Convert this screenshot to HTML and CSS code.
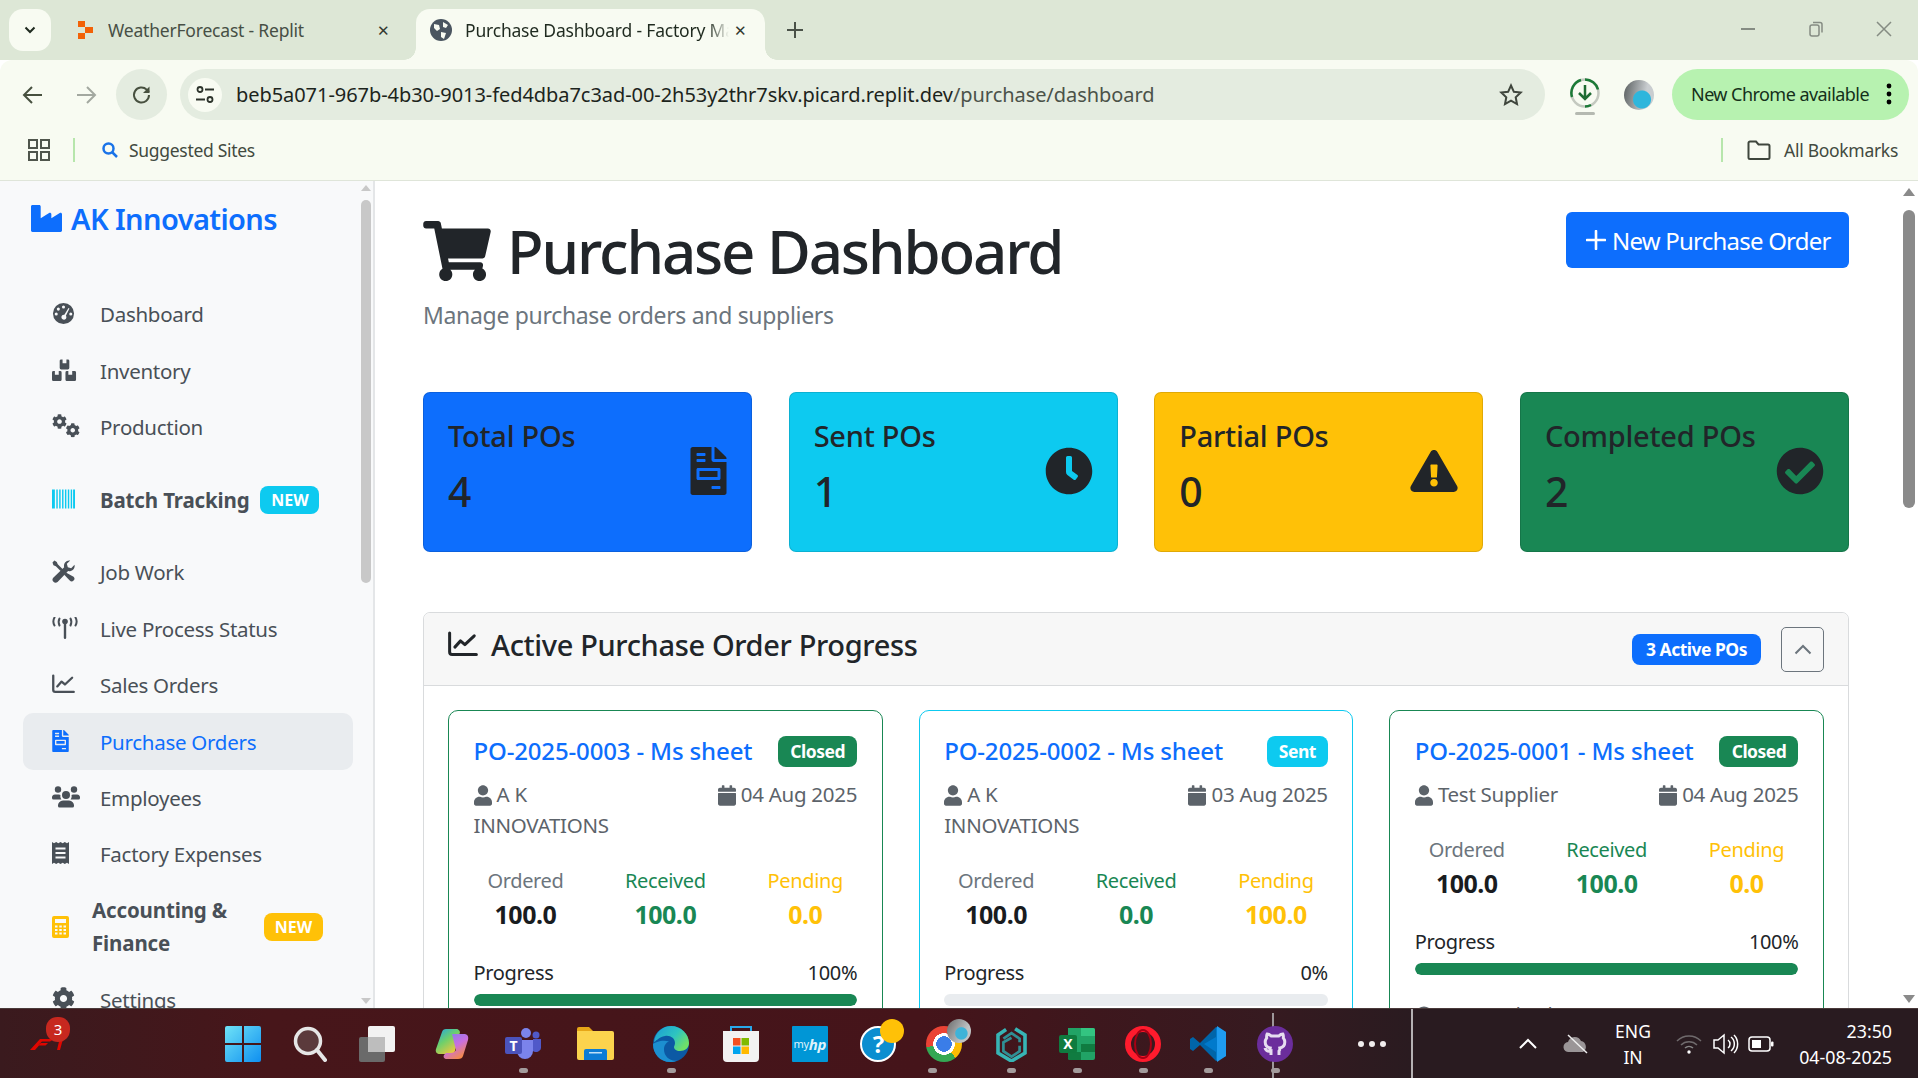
FILE: index.html
```html
<!DOCTYPE html>
<html lang="en">
<head>
<meta charset="utf-8">
<title>Purchase Dashboard - Factory Management</title>
<link rel="stylesheet" href="styles.css">
</head>
<body>
<svg class="sprite" aria-hidden="true">
  <symbol id="i-factory" viewBox="0 0 512 512"><path d="M475.115 163.781L336 252.309v-68.28c0-18.916-20.931-30.399-36.885-20.248L160 252.309V56c0-13.255-10.745-24-24-24H24C10.745 32 0 42.745 0 56v400c0 13.255 10.745 24 24 24h464c13.255 0 24-10.745 24-24V184.029c0-18.917-20.931-30.399-36.885-20.248z"/></symbol>
  <symbol id="i-gauge" viewBox="0 0 24 24"><path fill-rule="evenodd" d="M12 1a11 11 0 1 0 0 22 11 11 0 0 0 0-22zM12 3.6a1.6 1.6 0 1 1 0 3.2 1.6 1.6 0 0 1 0-3.2zM6.6 5.8a1.6 1.6 0 1 1 0 3.2 1.6 1.6 0 0 1 0-3.2zM4.4 11a1.6 1.6 0 1 1 0 3.2 1.6 1.6 0 0 1 0-3.2zM19.6 11a1.6 1.6 0 1 1 0 3.2 1.6 1.6 0 0 1 0-3.2zM17.2 6.2l1 .5-3.7 7.6a2.6 2.6 0 1 1-1.6-1z"/></symbol>
  <symbol id="i-boxes" viewBox="0 0 26 22"><path fill-rule="evenodd" d="M8 1.5A1.5 1.5 0 0 1 9.500 0H11v4h4V0h1.500A1.500 1.500 0 0 1 18 1.500V9a1.500 1.500 0 0 1-1.500 1.500h-7A1.500 1.500 0 0 1 8 9zM0 13.500A1.500 1.500 0 0 1 1.500 12H3v4h4v-4h1.500a1.500 1.500 0 0 1 1.500 1.500V21a1.500 1.500 0 0 1-1.500 1.500h-7A1.500 1.500 0 0 1 0 21zM14 13.500a1.500 1.500 0 0 1 1.500-1.500H17v4h4v-4h2.500a1.500 1.500 0 0 1 1.500 1.500V21a1.500 1.500 0 0 1-1.500 1.500h-8A1.500 1.500 0 0 1 14 21z"/></symbol>
  <symbol id="i-cog" viewBox="0 0 512 512"><path d="M487.4 315.7l-42.600-24.600c4.300-23.200 4.300-47 0-70.200l42.600-24.600c4.900-2.800 7.100-8.600 5.500-14-11.100-35.600-30-67.800-54.700-94.600-3.800-4.100-10-5.100-14.800-2.300L380.800 110c-17.900-15.400-38.500-27.300-60.800-35.100V25.800c0-5.600-3.900-10.500-9.400-11.700-36.700-8.200-74.300-7.800-109.200 0-5.500 1.200-9.400 6.100-9.400 11.700V75c-22.200 7.900-42.800 19.800-60.800 35.100L88.700 85.500c-4.900-2.800-11-1.900-14.800 2.300-24.700 26.700-43.600 58.900-54.700 94.600-1.700 5.400.6 11.200 5.500 14L67.300 221c-4.300 23.200-4.300 47 0 70.200l-42.600 24.600c-4.900 2.800-7.100 8.600-5.500 14 11.100 35.600 30 67.800 54.700 94.600 3.800 4.100 10 5.100 14.800 2.300l42.600-24.600c17.900 15.400 38.500 27.300 60.800 35.100v49.200c0 5.600 3.900 10.500 9.400 11.700 36.700 8.200 74.300 7.800 109.200 0 5.500-1.200 9.400-6.100 9.400-11.700v-49.200c22.200-7.900 42.800-19.800 60.800-35.100l42.600 24.600c4.900 2.800 11 1.900 14.800-2.300 24.700-26.700 43.600-58.900 54.700-94.600 1.500-5.500-.7-11.300-5.600-14.100zM256 336c-44.100 0-80-35.900-80-80s35.900-80 80-80 80 35.900 80 80-35.900 80-80 80z"/></symbol>
  <symbol id="i-cogs" viewBox="0 0 28 24"><use href="#i-cog" x="0" y="0" width="15" height="15"/><use href="#i-cog" x="13.500" y="9" width="14.500" height="14.500"/></symbol>
  <symbol id="i-barcode" viewBox="0 0 24 20"><path d="M0 0h3v20H0zM4.500 0h1.500v20H4.500zM7.500 0h1.500v20H7.500zM10.500 0h1.500v20h-1.500zM13.500 0h1.500v20h-1.500zM16.500 0h1.500v20h-1.500zM19.500 0h1.500v20h-1.500zM22 0h2v20h-2z"/></symbol>
  <symbol id="i-tools" viewBox="0 0 24 24"><path d="M2.500 0.500 0.500 2.500l1 3 2.500 1 5.500 5.500 2-2L6 4.500l-1-2.500zM18 .5a5.500 5.500 0 0 0-5.300 7L1.300 18.500a3.200 3.200 0 0 0 4.500 4.500L16.800 11.500A5.500 5.500 0 0 0 23.500 5l-3.500 3.500-3.500-1-1-3.500 3.500-3.500z"/><path d="M14.500 13l-2 2 6 6.500a2.800 2.800 0 0 0 4-4z"/></symbol>
  <symbol id="i-tower" viewBox="0 0 26 22"><circle cx="13" cy="4.500" r="2.800"/><rect x="11.800" y="4" width="2.400" height="18" rx="1.200"/><g fill="none" stroke="currentColor" stroke-width="2" stroke-linecap="round"><path d="M7.500 1.500Q5.800 4.500 7.500 8.500"/><path d="M18.500 1.500Q20.200 4.500 18.500 8.500"/><path d="M2.500 .5Q.2 4.500 2.500 8.500"/><path d="M23.500 .5Q25.800 4.500 23.500 8.500"/></g></symbol>
  <symbol id="i-chart" viewBox="0 0 24 20"><g fill="none" stroke="currentColor" stroke-linecap="round" stroke-linejoin="round" stroke-width="2.400"><path d="M1.300 1.200V16.300a2 2 0 0 0 2 2H22.700"/><path d="M5.500 12.500 10 7.500l3.500 3L21 3.500"/></g></symbol>
  <symbol id="i-invoice" viewBox="0 0 384 512"><path d="M288 256H96v64h192v-64zm89-151L279.100 7c-4.500-4.500-10.600-7-17-7H256v128h128v-6.100c0-6.300-2.500-12.400-7-16.900zm-153 31V0H24C10.700 0 0 10.700 0 24v464c0 13.300 10.700 24 24 24h336c13.300 0 24-10.700 24-24V160H248c-13.200 0-24-10.800-24-24zM64 72c0-4.420 3.580-8 8-8h80c4.420 0 8 3.580 8 8v16c0 4.420-3.580 8-8 8H72c-4.420 0-8-3.580-8-8V72zm0 64c0-4.420 3.580-8 8-8h80c4.420 0 8 3.580 8 8v16c0 4.420-3.580 8-8 8H72c-4.420 0-8-3.580-8-8v-16zm256 304c0 4.420-3.580 8-8 8h-80c-4.420 0-8-3.580-8-8v-16c0-4.420 3.580-8 8-8h80c4.420 0 8 3.580 8 8v16zm0-200v96c0 8.840-7.160 16-16 16H80c-8.840 0-16-7.160-16-16v-96c0-8.840 7.160-16 16-16h224c8.840 0 16 7.160 16 16z"/></symbol>
  <symbol id="i-users" viewBox="0 0 28 22"><circle cx="6" cy="3.500" r="3.200"/><circle cx="22" cy="3.500" r="3.200"/><circle cx="14" cy="9" r="4"/><path d="M0 12a3 3 0 0 1 3-3.500h4a4 4 0 0 1 1.500.4 5.600 5.600 0 0 0 .9 4.600H1.500A1.500 1.500 0 0 1 0 12zM28 12a3 3 0 0 0-3-3.500h-4a4 4 0 0 0-1.500.4 5.600 5.600 0 0 1-.9 4.600h7.900a1.500 1.500 0 0 0 1.500-1.500zM6 20a5 5 0 0 1 5-5.500h6a5 5 0 0 1 5 5.500 1.500 1.500 0 0 1-1.500 1.500h-13A1.500 1.500 0 0 1 6 20z"/></symbol>
  <symbol id="i-receipt" viewBox="0 0 17 22"><path fill-rule="evenodd" d="M0 0l2 1.200L4.200 0l2.100 1.200L8.500 0l2.200 1.200L12.800 0 15 1.200 17 0v22l-2-1.200-2.200 1.200-2.100-1.200L8.500 22l-2.200-1.200L4.200 22 2 20.800 0 22zM3.500 5.500v2h10v-2zM3.500 10v2h10v-2zM3.500 14.500v2h10v-2z"/></symbol>
  <symbol id="i-calc" viewBox="0 0 17 22"><path fill-rule="evenodd" d="M2 0h13a2 2 0 0 1 2 2v18a2 2 0 0 1-2 2H2a2 2 0 0 1-2-2V2a2 2 0 0 1 2-2zM3 3v4h11V3zM3 9.500v2h2.500v-2zM7.300 9.500v2h2.500v-2zM11.500 9.500v2H14v-2zM3 13v2h2.500v-2zM7.300 13v2h2.500v-2zM11.500 13v2H14v-2zM3 16.500v2h2.500v-2zM7.300 16.500v2h2.500v-2zM11.500 16.500v2H14v-2z"/></symbol>
  <symbol id="i-cart" viewBox="0 0 576 512"><path d="M528.120 301.319l47.273-208C578.806 78.301 567.391 64 551.990 64H159.208l-9.166-44.810C147.758 8.021 137.930 0 126.529 0H24C10.745 0 0 10.745 0 24v16c0 13.255 10.745 24 24 24h69.883l70.248 343.435C147.325 417.100 136 435.222 136 456c0 30.928 25.072 56 56 56s56-25.072 56-56c0-15.674-6.447-29.835-16.824-40h209.647C430.447 426.165 424 440.326 424 456c0 30.928 25.072 56 56 56s56-25.072 56-56c0-22.172-12.888-41.332-31.579-50.405l5.517-24.276c3.413-15.018-8.002-29.319-23.403-29.319H218.117l-6.545-32h293.145c11.206 0 20.920-7.754 23.403-18.681z"/></symbol>
  <symbol id="i-warn" viewBox="0 0 576 512"><path d="M569.517 440.013C587.975 472.007 564.806 512 527.940 512H48.054c-36.937 0-59.999-40.055-41.577-71.987L246.423 23.985c18.467-32.009 64.720-31.951 83.154 0l239.940 416.028zM288 354c-25.405 0-46 20.595-46 46s20.595 46 46 46 46-20.595 46-46-20.595-46-46-46zm-43.673-165.346l7.418 136c.347 6.364 5.609 11.346 11.982 11.346h48.546c6.373 0 11.635-4.982 11.982-11.346l7.418-136c.375-6.874-5.098-12.654-11.982-12.654h-63.383c-6.884 0-12.356 5.780-11.981 12.654z"/></symbol>
  <symbol id="i-check" viewBox="0 0 512 512"><path d="M504 256c0 136.967-111.033 248-248 248S8 392.967 8 256 119.033 8 256 8s248 111.033 248 248zM227.314 387.314l184-184c6.248-6.248 6.248-16.379 0-22.627l-22.627-22.627c-6.248-6.249-16.379-6.249-22.628 0L216 308.118l-70.059-70.059c-6.248-6.248-16.379-6.248-22.628 0l-22.627 22.627c-6.248 6.248-6.248 16.379 0 22.627l104 104c6.249 6.250 16.379 6.250 22.628.001z"/></symbol>
  <symbol id="i-clock" viewBox="0 0 512 512"><path d="M256 8C119 8 8 119 8 256s111 248 248 248 248-111 248-248S393 8 256 8zm92.490 313l-20 25a16 16 0 0 1-22.490 2.500l-67-49.720a40 40 0 0 1-15-31.230V112a16 16 0 0 1 16-16h32a16 16 0 0 1 16 16v144l58 42.500a16 16 0 0 1 2.490 22.500z"/></symbol>
  <symbol id="i-user" viewBox="0 0 448 512"><path d="M224 256c70.700 0 128-57.300 128-128S294.700 0 224 0 96 57.300 96 128s57.300 128 128 128zm89.600 32h-16.700c-22.200 10.200-46.900 16-72.900 16s-50.600-5.800-72.900-16h-16.700C60.200 288 0 348.200 0 422.400V464c0 26.500 21.500 48 48 48h352c26.500 0 48-21.500 48-48v-41.600c0-74.200-60.200-134.400-134.400-134.400z"/></symbol>
  <symbol id="i-cal" viewBox="0 0 448 512"><path d="M12 192h424c6.600 0 12 5.400 12 12v260c0 26.500-21.500 48-48 48H48c-26.500 0-48-21.500-48-48V204c0-6.600 5.400-12 12-12zm436-44v-36c0-26.500-21.500-48-48-48h-48V12c0-6.600-5.400-12-12-12h-40c-6.600 0-12 5.400-12 12v52H160V12c0-6.600-5.400-12-12-12h-40c-6.600 0-12 5.400-12 12v52H48C21.500 64 0 85.500 0 112v36c0 6.600 5.400 12 12 12h424c6.600 0 12-5.400 12-12z"/></symbol>
  <symbol id="i-info" viewBox="0 0 20 20"><circle cx="10" cy="10" r="10"/></symbol>
</svg>

<header class="tabstrip">
  <button class="tab-menu"><svg width="12" height="8" viewBox="0 0 12 8"><path d="M1.500 1.500 6 6l4.500-4.500" fill="none" stroke="#1f2a1f" stroke-width="2"/></svg></button>
  <div class="tab">
    <svg class="fav" width="16" height="20" viewBox="0 0 16 20"><path fill="#f26207" d="M0 1h7v6H0zM7 7h8v6H7zM0 13h7v6H0z"/></svg>
    <span class="tab-title">WeatherForecast - Replit</span>
    <span class="tab-x">✕</span>
  </div>
  <div class="tab tab-active">
    <svg class="fav" width="22" height="22" viewBox="0 0 22 22"><circle cx="11" cy="11" r="11" fill="#4a5560"/><path fill="#f8fbf2" d="M4 5l5 1 1 4-3 2-3-3zM13 3l5 3-2 3-3-1zM11 13l5 1-2 6-3-2z"/></svg>
    <span class="tab-title tab-title-fade">Purchase Dashboard - Factory Management</span>
    <span class="tab-x">✕</span>
  </div>
  <svg class="newtab" width="18" height="18" viewBox="0 0 18 18"><path d="M9 1v16M1 9h16" stroke="#4a5248" stroke-width="2"/></svg>
  <div class="winctl">
    <svg width="16" height="16" viewBox="0 0 16 16"><path d="M1 8h14" stroke="#858c83" stroke-width="2"/></svg>
    <svg width="16" height="16" viewBox="0 0 16 16"><rect x="2" y="4" width="9" height="11" rx="2" fill="none" stroke="#858c83" stroke-width="1.500"/><path d="M5 1.500h7a2 2 0 0 1 2 2v8" fill="none" stroke="#858c83" stroke-width="1.500"/></svg>
    <svg width="16" height="16" viewBox="0 0 16 16"><path d="M1 1l14 14M15 1 1 15" stroke="#858c83" stroke-width="1.500"/></svg>
  </div>
</header>

<nav class="toolbar">
  <svg class="tool-ic" width="22" height="22" viewBox="0 0 22 22"><path d="M20 11H3M10 3l-8 8 8 8" fill="none" stroke="#47503f" stroke-width="2"/></svg>
  <svg class="tool-ic tool-dim" width="22" height="22" viewBox="0 0 22 22"><path d="M2 11h17M12 3l8 8-8 8" fill="none" stroke="#a3a8a0" stroke-width="2"/></svg>
  <div class="reload"><svg width="22" height="22" viewBox="0 0 22 22"><path d="M18 11a7.500 7.500 0 1 1-2.300-5.400L18 8" fill="none" stroke="#47503f" stroke-width="2"/><path d="M18.500 2.500v6.500h-6.500z" fill="#47503f"/></svg></div>
  <div class="omnibox">
    <span class="chip"><svg width="20" height="20" viewBox="0 0 20 20"><g fill="none" stroke="#2c332b" stroke-width="1.800"><circle cx="5" cy="4.500" r="2.500"/><path d="M10 4.500h9M1 14.500h9"/><circle cx="15" cy="14.500" r="2.500"/></g></svg></span>
    <span class="url">beb5a071-967b-4b30-9013-fed4dba7c3ad-00-2h53y2thr7skv.picard.replit.dev<span class="url-path">/purchase/dashboard</span></span>
    <svg class="star" width="24" height="24" viewBox="0 0 24 24"><path d="M12 2.500l2.900 6.300 6.800.8-5 4.700 1.300 6.800-6-3.400-6 3.400 1.300-6.800-5-4.700 6.800-.8z" fill="none" stroke="#3f463d" stroke-width="2"/></svg>
  </div>
  <div class="dl">
    <svg width="32" height="38" viewBox="0 0 32 38"><circle cx="16" cy="15" r="13.500" fill="none" stroke="#c4c9c0" stroke-width="2.500"/><path d="M16 1.500a13.500 13.500 0 0 1 13 10M3 19a13.500 13.500 0 0 1 9-17M22 27a13.500 13.500 0 0 1-6 1.500" fill="none" stroke="#1c7a37" stroke-width="2.500"/><path d="M16 7v14M10 15l6 6 6-6" fill="none" stroke="#1f6b33" stroke-width="2.500"/><rect x="6" y="34" width="20" height="3" rx="1.500" fill="#b5b9b1"/></svg>
  </div>
  <div class="avatar"></div>
  <div class="update"><span>New Chrome available</span><svg width="6" height="22" viewBox="0 0 6 22"><circle cx="3" cy="3" r="2.400"/><circle cx="3" cy="11" r="2.400"/><circle cx="3" cy="19" r="2.400"/></svg></div>
</nav>

<div class="bookmarks">
  <svg width="22" height="22" viewBox="0 0 22 22"><g fill="none" stroke="#4f554c" stroke-width="2"><rect x="1" y="1" width="8" height="8"/><rect x="13" y="1" width="8" height="8"/><rect x="1" y="13" width="8" height="8"/><rect x="13" y="13" width="8" height="8"/></g></svg>
  <span class="bm-div bm-div-a"></span>
  <svg class="bm-search" width="18" height="18" viewBox="0 0 18 18"><circle cx="7.500" cy="7.500" r="5" fill="none" stroke="#1a73e8" stroke-width="2.500"/><path d="M11 11l5 5" stroke="#1a73e8" stroke-width="2.500"/></svg>
  <span class="bm-label">Suggested Sites</span>
  <span class="bm-spacer"></span>
  <span class="bm-div"></span>
  <svg class="bm-folder" width="24" height="20" viewBox="0 0 24 20"><path d="M1.500 3a1.500 1.500 0 0 1 1.500-1.500h6l2.500 3H21a1.500 1.500 0 0 1 1.500 1.500v11.500A1.500 1.500 0 0 1 21 19H3a1.500 1.500 0 0 1-1.500-1.500z" fill="none" stroke="#3f463d" stroke-width="2"/></svg>
  <span class="bm-label">All Bookmarks</span>
</div>

<div class="viewport">
  <aside class="sidebar">
    <div class="side-content">
      <a class="brand"><svg class="brand-ic"><use href="#i-factory"/></svg>AK Innovations</a>
      <ul class="nav">
        <li class="nav-item"><svg class="nic ic-gauge"><use href="#i-gauge"/></svg><span>Dashboard</span></li>
        <li class="nav-item"><svg class="nic ic-boxes"><use href="#i-boxes"/></svg><span>Inventory</span></li>
        <li class="nav-item"><svg class="nic ic-cogs"><use href="#i-cogs"/></svg><span>Production</span></li>
        <li class="nav-item nav-batch"><svg class="nic ic-bar"><use href="#i-barcode"/></svg><b>Batch Tracking</b><em class="new new-info">NEW</em></li>
        <li class="nav-item"><svg class="nic ic-gauge"><use href="#i-tools"/></svg><span>Job Work</span></li>
        <li class="nav-item"><svg class="nic ic-tower"><use href="#i-tower"/></svg><span>Live Process Status</span></li>
        <li class="nav-item"><svg class="nic ic-chart"><use href="#i-chart"/></svg><span>Sales Orders</span></li>
        <li class="nav-item nav-active"><svg class="nic ic-inv"><use href="#i-invoice"/></svg><span>Purchase Orders</span></li>
        <li class="nav-item"><svg class="nic ic-users"><use href="#i-users"/></svg><span>Employees</span></li>
        <li class="nav-item"><svg class="nic ic-inv"><use href="#i-receipt"/></svg><span>Factory Expenses</span></li>
        <li class="nav-item nav-acc"><svg class="nic ic-calc"><use href="#i-calc"/></svg><b>Accounting &amp; Finance</b><em class="new new-warn">NEW</em></li>
        <li class="nav-item"><svg class="nic ic-gauge"><use href="#i-cog"/></svg><span>Settings</span></li>
      </ul>
    </div>
    <div class="sb sb-side">
      <i class="arr-up"></i><i class="thumb"></i><i class="sb-fill"></i><i class="arr-down"></i>
    </div>
  </aside>

  <main class="main">
    <div class="page">
      <div class="page-head">
        <div>
          <h1><svg class="h1-ic"><use href="#i-cart"/></svg>Purchase Dashboard</h1>
          <p class="sub">Manage purchase orders and suppliers</p>
        </div>
        <a class="btn-new"><svg width="20" height="20" viewBox="0 0 20 20"><path d="M10 1v18M1 10h18" stroke="#fff" stroke-width="2.600" stroke-linecap="round"/></svg>New Purchase Order</a>
      </div>

      <section class="stats">
        <div class="stat stat-blue"><div><h5>Total POs</h5><div class="stat-n">4</div></div><svg class="stat-ic stat-ic-doc"><use href="#i-invoice"/></svg></div>
        <div class="stat stat-cyan"><div><h5>Sent POs</h5><div class="stat-n">1</div></div><svg class="stat-ic"><use href="#i-clock"/></svg></div>
        <div class="stat stat-amber"><div><h5>Partial POs</h5><div class="stat-n">0</div></div><svg class="stat-ic stat-ic-warn"><use href="#i-warn"/></svg></div>
        <div class="stat stat-green"><div><h5>Completed POs</h5><div class="stat-n">2</div></div><svg class="stat-ic"><use href="#i-check"/></svg></div>
      </section>

      <section class="panel">
        <div class="panel-head">
          <h4><svg class="panel-ic"><use href="#i-chart"/></svg>Active Purchase Order Progress</h4>
          <span class="badge badge-blue">3 Active POs</span>
          <button class="collapse"><svg width="18" height="11" viewBox="0 0 18 11"><path d="M1.500 9.500 9 2l7.500 7.500" fill="none" stroke="#6c757d" stroke-width="2"/></svg></button>
        </div>
        <div class="po-grid">
          <article class="po po-green">
            <div class="po-top"><a class="po-name">PO-2025-0003 - Ms sheet</a><span class="badge badge-green">Closed</span></div>
            <div class="po-meta"><span class="supplier"><svg class="m-ic"><use href="#i-user"/></svg> A K INNOVATIONS</span><span class="date"><svg class="m-ic m-cal"><use href="#i-cal"/></svg> 04 Aug 2025</span></div>
            <div class="po-nums"><div><small>Ordered</small><strong>100.0</strong></div><div class="c-green"><small>Received</small><strong>100.0</strong></div><div class="c-amber"><small>Pending</small><strong>0.0</strong></div></div>
            <div class="po-prog"><span>Progress</span><span>100%</span></div>
            <div class="bar"><div class="bar-fill" style="width:100%"></div></div>
          </article>
          <article class="po po-cyan">
            <div class="po-top"><a class="po-name">PO-2025-0002 - Ms sheet</a><span class="badge badge-cyan">Sent</span></div>
            <div class="po-meta"><span class="supplier"><svg class="m-ic"><use href="#i-user"/></svg> A K INNOVATIONS</span><span class="date"><svg class="m-ic m-cal"><use href="#i-cal"/></svg> 03 Aug 2025</span></div>
            <div class="po-nums"><div><small>Ordered</small><strong>100.0</strong></div><div class="c-green"><small>Received</small><strong>0.0</strong></div><div class="c-amber"><small>Pending</small><strong>100.0</strong></div></div>
            <div class="po-prog"><span>Progress</span><span>0%</span></div>
            <div class="bar"><div class="bar-fill" style="width:0%"></div></div>
          </article>
          <article class="po po-green">
            <div class="po-top"><a class="po-name">PO-2025-0001 - Ms sheet</a><span class="badge badge-green">Closed</span></div>
            <div class="po-meta"><span class="supplier"><svg class="m-ic"><use href="#i-user"/></svg> Test Supplier</span><span class="date"><svg class="m-ic m-cal"><use href="#i-cal"/></svg> 04 Aug 2025</span></div>
            <div class="po-nums"><div><small>Ordered</small><strong>100.0</strong></div><div class="c-green"><small>Received</small><strong>100.0</strong></div><div class="c-amber"><small>Pending</small><strong>0.0</strong></div></div>
            <div class="po-prog"><span>Progress</span><span>100%</span></div>
            <div class="bar"><div class="bar-fill" style="width:100%"></div></div>
            <div class="po-extra"><span><svg class="m-ic"><use href="#i-info"/></svg> Expected Value</span><span>7000000</span></div>
          </article>
        </div>
      </section>
    </div>
    <div class="sb sb-main">
      <i class="arr-up"></i><i class="thumb"></i><i class="sb-fill"></i><i class="arr-down"></i>
    </div>
  </main>
</div>

<footer class="taskbar">
  <i class="tb-line tb-line-a"></i><i class="tb-line tb-line-b"></i>
  <div class="tb-f1">
    <svg width="33" height="11" viewBox="0 0 33 11" preserveAspectRatio="none"><path fill="#e10600" d="M10 0h14l-4 2.500H12L3 11H0zM11 4h7l-2.500 2.500H9l-4 4.500H2zM26 0h7l-3 11h-3l2-8.500h-2z"/></svg>
    <span class="tb-count">3</span>
  </div>
  <div class="tb-apps">
    <div class="app"><svg width="36" height="36" viewBox="0 0 36 36"><defs><linearGradient id="w" x1="0" y1="0" x2="1" y2="1"><stop offset="0" stop-color="#6fe3f7"/><stop offset="1" stop-color="#0f8ff0"/></linearGradient></defs><path fill="url(#w)" d="M2 0h15v17H0V2a2 2 0 0 1 2-2zM19 0h15a2 2 0 0 1 2 2v15H19zM0 19h17v17H2a2 2 0 0 1-2-2zM19 19h17v15a2 2 0 0 1-2 2H19z"/></svg></div>
    <div class="app"><svg width="34" height="36" viewBox="0 0 34 36"><circle cx="15" cy="15" r="12.500" fill="#5b3a3c" stroke="#e6e6e6" stroke-width="3.500"/><path d="M24 24l8 10" stroke="#e6e6e6" stroke-width="4" stroke-linecap="round"/></svg></div>
    <div class="app"><svg width="36" height="36" viewBox="0 0 36 36"><rect x="0" y="11" width="26" height="25" rx="2" fill="#6a6a6a"/><rect x="9" y="0" width="27" height="26" rx="2" fill="#f2f2f2"/><rect x="9" y="11" width="17" height="15" fill="#bdbdbd"/></svg></div>
    <div class="app"><svg width="34" height="32" viewBox="0 0 34 32"><defs><linearGradient id="cpa" x1="0" y1="0" x2=".7" y2="1"><stop offset="0" stop-color="#1ea5e8"/><stop offset=".5" stop-color="#6fd06a"/><stop offset="1" stop-color="#f7c63c"/></linearGradient><linearGradient id="cpb" x1="0" y1="0" x2=".6" y2="1"><stop offset="0" stop-color="#7a7ff0"/><stop offset=".55" stop-color="#c86fe0"/><stop offset="1" stop-color="#f58a4a"/></linearGradient></defs><path fill="url(#cpa)" d="M11 1h10c3 0 3.500 2 4 3l-5 19c-.6 2-2 3-4 3H5C2 26 0 24 1 21L7 4c.5-2 2-3 4-3z"/><path fill="url(#cpb)" d="M17 6h12c3 0 5 2 4 6l-5 16c-.6 2-2 3-5 3H12c-3 0-4-2-3-4l2-2h5c2 0 4-1 5-3z"/></svg></div>
    <div class="app app-run"><svg width="36" height="32" viewBox="0 0 36 32"><circle cx="21" cy="5" r="5" fill="#7b83eb"/><circle cx="31" cy="7" r="3.500" fill="#5059c9"/><path fill="#7b83eb" d="M12 12h16v11a8 8 0 0 1-16 0z"/><path fill="#5059c9" d="M28 11h8v9a5 5 0 0 1-8 3z"/><rect x="0" y="9" width="17" height="17" rx="2" fill="#4b53bc"/><text x="8.500" y="23" text-anchor="middle" class="svg-t">T</text></svg></div>
    <div class="app"><svg width="37" height="33" viewBox="0 0 37 33"><path fill="#e7a617" d="M0 2a2 2 0 0 1 2-2h10l4 4h-16z"/><path fill="#fcd34d" d="M0 4h35a2 2 0 0 1 2 2v25a2 2 0 0 1-2 2H2a2 2 0 0 1-2-2z"/><path fill="#0c7cd5" d="M7 24a2 2 0 0 1 2-2h19a2 2 0 0 1 2 2v9H7z"/><rect x="12" y="25" width="13" height="1.500" fill="#bfe0f7"/></svg></div>
    <div class="app app-run"><svg width="36" height="36" viewBox="0 0 36 36"><defs><linearGradient id="ed" x1="0" y1="0" x2="1" y2=".6"><stop offset="0" stop-color="#1a9ad6"/><stop offset=".6" stop-color="#2ec4c0"/><stop offset="1" stop-color="#6fe068"/></linearGradient></defs><circle cx="18" cy="18" r="18" fill="#0c59a4"/><path fill="url(#ed)" d="M1 16C2 6 10 0 18 0c10 0 18 8 18 17 0 5-4 8-9 8-4 0-6-2-6-4 0-1 1-2 1-4 0-5-5-8-10-7-6 1-10 6-11 6z"/><path fill="#1c8fd0" d="M0 18c0 10 7 18 17 18 3 0 5-.5 7-1.500-7 1-13-4-13-11 0-4 2-7 5-8-7-2-14 1-16 2.500z"/></svg></div>
    <div class="app"><svg width="36" height="36" viewBox="0 0 36 36"><path d="M8 6V1h20v5" fill="none" stroke="#28a8ea" stroke-width="2"/><path fill="#f2f2f2" d="M0 5h36v27a4 4 0 0 1-4 4H4a4 4 0 0 1-4-4z"/><rect x="10" y="12" width="7.500" height="7.500" fill="#f25022"/><rect x="18.500" y="12" width="7.500" height="7.500" fill="#7fba00"/><rect x="10" y="20.500" width="7.500" height="7.500" fill="#00a4ef"/><rect x="18.500" y="20.500" width="7.500" height="7.500" fill="#ffb900"/></svg></div>
    <div class="app"><div class="myhp">my<i>hp</i></div></div>
    <div class="app"><div class="help">?</div><i class="help-dot"></i></div>
    <div class="app app-run app-chrome"><div class="chrome"></div><i class="chrome-av"></i></div>
    <div class="app app-run"><svg width="33" height="36" viewBox="0 0 36 40"><path d="M22 3 33 10v20l-15 9-15-9V10l9-6" fill="none" stroke="#37b5b5" stroke-width="4"/><path d="M9 14l9-6 9 6v4M27 22v6l-9 6-9-6V18l9-5" fill="none" stroke="#2f8f94" stroke-width="3"/></svg></div>
    <div class="app app-run"><svg width="36" height="32" viewBox="0 0 36 32"><path fill="#21a366" d="M9 0h25a2 2 0 0 1 2 2v28a2 2 0 0 1-2 2H11a2 2 0 0 1-2-2z"/><path fill="#33c481" d="M22 0h12a2 2 0 0 1 2 2v6H22z"/><path fill="#107c41" d="M22 16h14v8H22zM9 24h13v8H11a2 2 0 0 1-2-2z"/><rect x="0" y="7" width="18" height="18" rx="2" fill="#0f7b3f"/><text x="9" y="21" text-anchor="middle" class="svg-t">X</text></svg></div>
    <div class="app app-run"><svg width="36" height="36" viewBox="0 0 36 36"><circle cx="18" cy="18" r="15" fill="none" stroke="#ff1b2d" stroke-width="6"/><ellipse cx="18" cy="18" rx="8" ry="14" fill="none" stroke="#a70014" stroke-width="2"/></svg></div>
    <div class="app app-run"><svg width="36" height="36" viewBox="0 0 36 36"><path fill="#0065a9" d="M26 1 10 17 3 11 0 13v10l3 2 7-6 16 16z"/><path fill="#007acc" d="M26 1l10 5v24l-10 5V11L14 18l12 8z"/><path fill="#1f9cf0" d="M27 0l9 6v24l-9 6z"/></svg></div>
    <div class="app app-run"><svg width="36" height="36" viewBox="0 0 36 36"><circle cx="18" cy="18" r="18" fill="#6b2d9c"/><path fill="none" stroke="#e6ddf0" stroke-width="3" d="M14 29v-4c-4 1-5.500-1-6-3M22 29v-4c1-1 1-2 .8-3 3-.5 5-2 5-6 0-2-.8-3-1.500-4 .2-1.500 0-3-.5-4-1.500 0-3 1-4 2h-7.600c-1-1-2.500-2-4-2-.5 1-.7 2.500-.5 4-.7 1-1.500 2-1.500 4 0 4 2 5.500 5 6-.2 1-.2 2 .2 3"/></svg></div>
    <div class="app tb-more"><i></i><i></i><i></i></div>
  </div>
  <div class="tray">
    <svg class="tray-chev" width="20" height="12" viewBox="0 0 20 12"><path d="M2 10 10 2l8 8" fill="none" stroke="#fff" stroke-width="2"/></svg>
    <svg class="tray-cloud" width="26" height="20" viewBox="0 0 26 20"><path fill="#9a9597" d="M6 18a5 5 0 0 1-1-10 7 7 0 0 1 13-1 6 6 0 0 1 2 11z"/><path d="M5 1l19 18" stroke="#eee" stroke-width="1.500"/></svg>
    <div class="tray-lang">ENG<br>IN</div>
    <svg class="tray-wifi" width="26" height="20" viewBox="0 0 26 20"><g fill="none" stroke="#6f6a6c" stroke-width="1.500"><path d="M1 7a17 17 0 0 1 24 0M5 11a11.500 11.500 0 0 1 16 0"/><path d="M9 14a6 6 0 0 1 8 0" stroke="#888"/></g><circle cx="13" cy="18" r="1.700" fill="#fff"/></svg>
    <svg class="tray-vol" width="26" height="22" viewBox="0 0 26 22"><path d="M1 7h4l6-5v18l-6-5H1z" fill="none" stroke="#fff" stroke-width="1.500"/><path d="M15 7a5 5 0 0 1 0 8M18 4a9 9 0 0 1 0 14M21 2a13 13 0 0 1 0 18" fill="none" stroke="#fff" stroke-width="1.500"/></svg>
    <svg class="tray-bat" width="26" height="16" viewBox="0 0 26 16"><rect x="1" y="1" width="21" height="14" rx="3" fill="none" stroke="#fff" stroke-width="1.500"/><rect x="4" y="4" width="9" height="8" fill="#fff"/><rect x="23" y="5.500" width="2.500" height="5" rx="1" fill="#fff"/></svg>
    <div class="tray-clock">23:50<br>04-08-2025</div>
  </div>
</footer>
</body>
</html>
```

FILE: styles.css
```css
* { box-sizing: border-box; }
html, body { margin: 0; padding: 0; height: 100%; }
body {
  width: 1918px; height: 1078px; overflow: hidden;
  display: flex; flex-direction: column;
  font-family: "Noto Sans", "Open Sans", sans-serif;
  color: #212529; background: #fff;
}
.sprite { position: absolute; width: 0; height: 0; overflow: hidden; }
svg { display: block; flex: none; }
h1, h4, h5, p, ul { margin: 0; padding: 0; }
ul { list-style: none; }
button { padding: 0; font: inherit; cursor: default; }
i, em { font-style: normal; }

/* browser chrome */
.tabstrip { height: 60px; flex: none; background: #dde7d6; display: flex; align-items: flex-start; padding: 9px 0 0 9px; }
.tab-menu { width: 42px; height: 42px; border: 0; border-radius: 14px; background: #f8fbf2; display: flex; align-items: center; justify-content: center; }
.tab { width: 353px; height: 51px; margin-left: 12px; padding: 0 22px 9px 15px; display: flex; align-items: center; font-size: 17.500px; letter-spacing: -.2px; color: #474f45; white-space: nowrap; }
.tab + .tab { margin-left: 0; width: 349px; padding-right: 14px; }
.tab-active { position: relative; background: #f8fbf2; border-radius: 14px 14px 0 0; color: #1f2a1f; padding-left: 14px; }
.tab-active::before, .tab-active::after { content: ""; position: absolute; bottom: 0; width: 12px; height: 12px; }
.tab-active::before { left: -12px; background: radial-gradient(circle at 0 0, #dde7d6 11.500px, #f8fbf2 12px); }
.tab-active::after { right: -12px; background: radial-gradient(circle at 100% 0, #dde7d6 11.500px, #f8fbf2 12px); }
.fav { margin-right: 14px; }
.tab-active .fav { margin-right: 13px; }
.tab-title { flex: 1; overflow: hidden; }
.tab-title-fade { -webkit-mask-image: linear-gradient(90deg, #000 92%, transparent); mask-image: linear-gradient(90deg, #000 92%, transparent); }
.tab-x { width: 22px; text-align: center; font-size: 15px; color: #333a31; }
.newtab { margin: 12px 0 0 21px; }
.winctl { margin-left: auto; display: flex; gap: 52px; padding: 12px 26px 0 0; }

.toolbar { height: 72px; flex: none; background: #f8fbf2; display: flex; align-items: center; padding: 0 8px 3px 22px; border-radius: 12px 12px 0 0; }
.tool-ic { margin-right: 31px; }
.tool-dim { margin-right: 19px; }
.reload { width: 51px; height: 51px; border-radius: 50%; background: #e4ece0; display: flex; align-items: center; justify-content: center; }
.omnibox { margin-left: 13px; width: 1365px; height: 51px; border-radius: 26px; background: #e4ece0; display: flex; align-items: center; padding: 0 22px 0 8px; }
.chip { width: 34px; height: 34px; border-radius: 50%; background: #f8fbf2; display: flex; align-items: center; justify-content: center; }
.url { margin-left: 14px; flex: 1; font-size: 20px; letter-spacing: -.06px; color: #1c241c; white-space: nowrap; }
.url-path { color: #4b5249; }
.dl { margin-left: 24px; width: 32px; padding-top: 5px; }
.avatar { margin-left: 23px; width: 30px; height: 30px; border-radius: 50%; background: radial-gradient(circle at 60% 65%, #2eb6dc 0 32%, transparent 36%), linear-gradient(100deg, #5a5f60, #c9cdd0 70%); }
.update { margin-left: 18px; width: 237px; height: 51px; border-radius: 26px; background: #b7f2b0; display: flex; align-items: center; justify-content: space-between; padding: 0 17px 1px 19px; font-size: 18px; letter-spacing: -.55px; color: #14301a; white-space: nowrap; }

.bookmarks { height: 49px; flex: none; background: #f8fbf2; border-bottom: 1px solid #dfe5d9; display: flex; align-items: center; padding: 0 20px 12px 28px; font-size: 17.500px; letter-spacing: -.3px; color: #424a40; white-space: nowrap; }
.bm-div { width: 2px; height: 24px; background: #b7e6ac; }
.bm-div-a { margin-left: 23px; }
.bm-search { margin: 0 10px 0 26px; }
.bm-spacer { flex: 1; }
.bm-folder { margin: 0 13px 0 24px; }

/* page frame */
.viewport { flex: 1; min-height: 0; display: flex; overflow: hidden; }
.sidebar { width: 375px; flex: none; background: #f8f9fa; border-right: 2px solid #e4e6e8; display: flex; overflow: hidden; }
.side-content { flex: 1; min-width: 0; padding: 18px 8px 0 23px; }
.brand { display: flex; align-items: center; height: 38px; margin: 0 0 49px 8px; font-size: 29px; font-weight: 600; letter-spacing: -.6px; color: #0d6efd; white-space: nowrap; }
.brand-ic { width: 31px; height: 31px; margin-right: 9px; fill: #0d6efd; }
.nav-item { display: flex; align-items: center; height: 56.400px; padding-left: 29px; width: 330px; font-size: 20.500px; letter-spacing: -.28px; color: #495057; white-space: nowrap; }
.nav-item b { font-weight: 700; letter-spacing: -.15px; }
.nic { width: 23px; height: 23px; margin-right: 25px; fill: #495057; color: #495057; position: relative; top: -1px; }
.ic-boxes { width: 25px; height: 22px; margin-right: 23px; }
.ic-cogs { width: 28px; height: 24px; margin-right: 20px; }
.ic-tower { width: 26px; height: 22px; margin-right: 22px; }
.ic-chart { width: 23px; height: 20px; }
.ic-users { width: 28px; height: 22px; margin-right: 20px; }
.ic-inv { width: 17px; height: 22px; margin-right: 31px; }
.ic-bar { width: 23px; height: 20px; fill: #0dcaf0; }
.ic-calc { width: 17px; height: 22px; margin-right: 23px; fill: #ffc107; top: 0; }
.nav-batch { margin: 16px 0 15px; height: 58px; }
.nav-active { background: #e9ecef; border-radius: 10px; color: #0d6efd; }
.nav-active .nic { fill: #0d6efd; }
.nav-acc { height: 89px; white-space: normal; }
.nav-acc b { width: 172px; line-height: 33px; }
.new { width: 59px; height: 28px; border-radius: 8px; display: flex; align-items: center; justify-content: center; font-size: 16px; font-weight: 700; color: #fff; letter-spacing: 0; }
.new-info { background: #0dcaf0; margin-left: 11px; }
.new-warn { background: #ffc107; }

.sb { flex: none; display: flex; flex-direction: column; align-items: center; }
.sb-side { width: 10px; margin: 0 2px 0 0; padding-top: 4px; }
.sb-main { width: 18px; padding-top: 7px; }
.arr-up, .arr-down { width: 0; height: 0; border-left: 5px solid transparent; border-right: 5px solid transparent; }
.arr-up { border-bottom: 6px solid #c8c8c8; }
.arr-down { border-top: 6px solid #c8c8c8; margin-bottom: 4px; }
.thumb { display: block; width: 10px; height: 383px; margin-top: 9px; background: #c8c8c8; border-radius: 5px; }
.sb-fill { flex: 1; }
.sb-main .arr-up { border-left-width: 6px; border-right-width: 6px; border-bottom: 8px solid #8a8a8a; }
.sb-main .arr-down { border-left-width: 6px; border-right-width: 6px; border-top: 8px solid #8a8a8a; margin-bottom: 5px; }
.sb-main .thumb { width: 12px; height: 298px; margin-top: 14px; background: #8a8a8a; border-radius: 6px; }

.main { flex: 1; min-width: 0; display: flex; background: #fff; overflow: hidden; }
.page { flex: 1; min-width: 0; padding: 31px 51px 0 48px; }
.page-head { display: flex; justify-content: space-between; align-items: flex-start; height: 180px; }
h1 { display: flex; align-items: center; margin-top: 3px; font-size: 60px; font-weight: 500; line-height: 72px; letter-spacing: -2.120px; white-space: nowrap; }
.h1-ic { width: 68px; height: 60px; margin-right: 16px; fill: #212529; }
.sub { margin-top: 12px; font-size: 23px; letter-spacing: -.32px; color: #6c757d; }
.btn-new { display: flex; align-items: center; gap: 6px; height: 56px; width: 283px; margin-top: 0; padding-left: 20px; border-radius: 6px; background: #0d6efd; color: #fff; font-size: 24px; letter-spacing: -.78px; white-space: nowrap; }

.stats { display: grid; grid-template-columns: repeat(4, minmax(0, 1fr)); gap: 36.500px; }
.stat { height: 160px; border-radius: 7px; border: 1px solid rgba(0,0,0,.12); padding: 26px 24px 0 24px; display: flex; justify-content: space-between; align-items: center; }
.stat > div { align-self: flex-start; }
h5 { font-size: 29px; font-weight: 500; line-height: 34px; letter-spacing: -.25px; white-space: nowrap; }
.stat-n { margin-top: 13px; font-size: 41px; font-weight: 500; line-height: 50px; }
.stat-ic { width: 48px; height: 48px; fill: #212529; margin-bottom: 28px; }
.stat-ic-doc { width: 37px; }
.stat-ic-warn { width: 48px; height: 42px; }
.stat-blue { background: #0d6efd; }
.stat-cyan { background: #0dcaf0; }
.stat-amber { background: #ffc107; }
.stat-green { background: #198754; }

.panel { margin-top: 60px; border: 1px solid #d9dbdd; border-radius: 7px; height: 500px; }
.panel-head { height: 73px; display: flex; align-items: center; background: #f7f7f7; border-bottom: 1px solid #d9dbdd; border-radius: 7px 7px 0 0; padding: 0 24px; }
h4 { display: flex; align-items: center; flex: 1; padding-bottom: 10px; font-size: 29px; font-weight: 500; letter-spacing: -.35px; white-space: nowrap; }
.panel-ic { width: 30px; height: 26px; margin-right: 13px; color: #212529; }
.badge { display: flex; align-items: center; justify-content: center; height: 31px; border-radius: 8px; color: #fff; font-size: 17.500px; font-weight: 700; letter-spacing: -.5px; white-space: nowrap; }
.badge-blue { width: 129px; background: #0d6efd; }
.badge-green { width: 79px; background: #198754; }
.badge-cyan { width: 61px; background: #0dcaf0; }
.collapse { width: 43px; height: 45px; margin-left: 20px; border: 1px solid #6c757d; border-radius: 5px; background: transparent; display: flex; align-items: center; justify-content: center; }

.po-grid { display: grid; grid-template-columns: repeat(3, minmax(0, 1fr)); gap: 36px; padding: 24px 24px 0; }
.po { border: 1px solid; border-radius: 10px; height: 420px; padding: 24px 24.500px; }
.po-green { border-color: #198754; }
.po-cyan { border-color: #0dcaf0; }
.po-top { display: flex; align-items: center; justify-content: space-between; height: 32px; }
.po-name { position: relative; top: -1px; font-size: 24px; font-weight: 500; letter-spacing: -.15px; color: #0d6efd; white-space: nowrap; }
.po-meta { display: flex; justify-content: space-between; margin-top: 12px; font-size: 20.500px; line-height: 31px; letter-spacing: -.28px; color: #5c636a; }
.supplier { max-width: 170px; }
.date { white-space: nowrap; }
.m-ic { display: inline-block; width: 18px; height: 21px; fill: #5c636a; vertical-align: -4px; }
.m-cal { width: 18px; }
.po-nums { display: grid; grid-template-columns: repeat(3, minmax(0, 1fr)); margin: 24px -18px 0; text-align: center; }
.po-nums small { display: block; font-size: 20px; line-height: 31px; letter-spacing: -.35px; color: #6c757d; }
.po-nums strong { display: block; margin-top: 2px; font-size: 25px; font-weight: 700; line-height: 32px; letter-spacing: -.5px; color: #191c1f; }
.po-nums .c-green small, .po-nums .c-green strong { color: #198754; }
.po-nums .c-amber small, .po-nums .c-amber strong { color: #ffc107; }
.po-prog { display: flex; justify-content: space-between; margin-top: 27px; font-size: 20px; line-height: 31px; letter-spacing: -.35px; }
.bar { height: 12px; margin-top: 6px; border-radius: 6px; background: #e9ecef; overflow: hidden; }
.bar-fill { height: 100%; background: #198754; border-radius: 6px; }
.po-extra { display: flex; justify-content: space-between; margin-top: 24px; font-size: 20px; line-height: 31px; letter-spacing: -.35px; color: #5c636a; }

/* taskbar */
.taskbar { position: relative; height: 70px; flex: none; display: flex; align-items: center; border-top: 1px solid #4a3a3a; background: linear-gradient(90deg, #3a1a1e 0, #47161a 14%, #45141a 48%, #361a20 66%, #291b20 74%, #291b20 100%); color: #fff; }
.tb-line { position: absolute; bottom: 0; width: 2px; background: #9d979a; }
.tb-line-a { left: 1272px; top: 4px; }
.tb-line-b { left: 1411px; top: 0; background: #b5b1b3; }
.tb-f1 { position: relative; width: 210.400px; height: 100%; flex: none; }
.tb-f1 svg { position: absolute; left: 30px; top: 30px; }
.tb-count { position: absolute; left: 46px; top: 8px; width: 24px; height: 25px; border-radius: 12px 12px 13px 13px; background: #c7281f; font-size: 15px; line-height: 24px; text-align: center; }
.tb-apps { display: flex; flex: none; }
.app { position: relative; width: 66px; height: 69px; flex: none; display: flex; align-items: center; justify-content: center; }
.app:nth-child(2), .app:nth-child(3), .app:nth-child(12), .app:nth-child(16) { margin-left: 1px; }
.app:nth-child(4) { margin-left: 9px; }
.app:nth-child(5) { margin-left: 5px; }
.app:nth-child(6) { margin-left: 6px; }
.app:nth-child(7) { margin-left: 10px; }
.app:nth-child(8) { margin-left: 4px; }
.app:nth-child(9), .app:nth-child(10) { margin-left: 2.500px; }
.app:nth-child(15) { margin-left: -1px; }
.app-run::after { content: ""; position: absolute; left: 28.500px; bottom: 5px; width: 9px; height: 5px; border-radius: 3px; background: #a39b9c; }
.app-chrome::after { left: 16.500px; }
.svg-t { fill: #fff; font-size: 14px; font-weight: 700; font-family: "Noto Sans", sans-serif; }
.myhp { width: 36px; height: 36px; border-radius: 1px; background: #0096d6; display: flex; align-items: center; justify-content: center; font-size: 11px; color: #dff3fb; letter-spacing: -.3px; }
.myhp i { font-style: italic; font-weight: 700; font-size: 15px; }
.help { width: 36px; height: 36px; border-radius: 50%; background: #0b8ed0; border: 2px solid #fff; display: flex; align-items: center; justify-content: center; font-size: 24px; font-weight: 700; color: #fff; }
.help-dot { position: absolute; left: 35px; top: 10px; width: 24px; height: 24px; border-radius: 50%; background: #ffc107; }
.chrome { width: 36px; height: 36px; border-radius: 50%; background: radial-gradient(circle, #3a7de8 0 30%, #fff 31% 42%, transparent 43%), conic-gradient(from 20deg, #fbbc04 0 120deg, #34a853 120deg 240deg, #ea4335 240deg 360deg); }
.chrome-av { position: absolute; left: 36px; top: 10px; width: 24px; height: 24px; border-radius: 50%; background: radial-gradient(circle at 60% 60%, #3fb3d8 0 28%, transparent 33%), linear-gradient(120deg, #6b6b6b, #c0c4c6 70%); }
.tb-more { gap: 5px; margin-left: 31px; }
.tb-more i { width: 6px; height: 6px; border-radius: 50%; background: #f1eded; }
.tray { position: relative; margin-left: auto; display: flex; align-items: center; padding-right: 26px; }
.tray-chev { margin-right: 25px; }
.tray-cloud { margin-right: 16px; }
.tray-lang { width: 56px; margin-right: 15px; text-align: center; font-size: 17.500px; line-height: 26px; }
.tray-wifi { margin-right: 11px; }
.tray-vol { margin-right: 9px; }
.tray-bat { margin-right: 16px; }
.tray-clock { width: 102px; text-align: right; font-size: 17.800px; line-height: 26px; white-space: nowrap; }
```
